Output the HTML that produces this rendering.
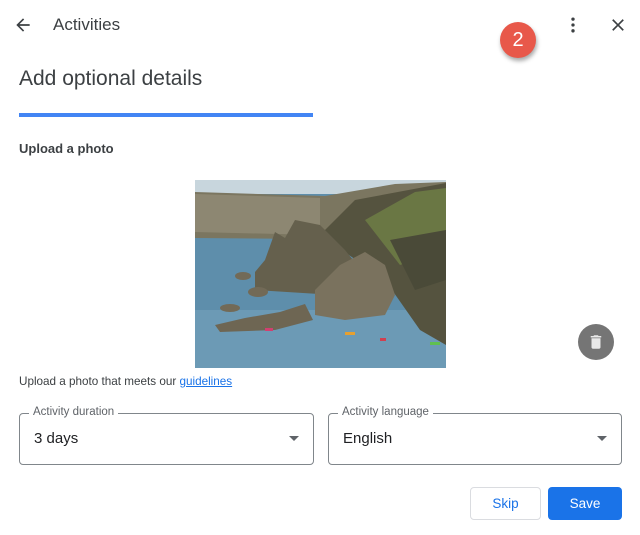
<!DOCTYPE html>
<html><head><meta charset="utf-8"><style>
*{margin:0;padding:0;box-sizing:border-box}
body{width:640px;height:535px;background:#fff;font-family:"Liberation Sans",Arial,sans-serif;color:#202124;position:relative;overflow:hidden}
.a{position:absolute}
.field{position:absolute;top:413px;height:52px;border:1px solid #80868b;border-radius:4px}
.field .lab{position:absolute;top:-8px;left:9px;background:#fff;padding:0 4px;font-size:11.5px;color:#5f6368}
.field .val{position:absolute;left:14px;top:16px;font-size:15px;color:#202124}
.field .tri{position:absolute;right:14px;top:22px;width:0;height:0;border-left:5px solid transparent;border-right:5px solid transparent;border-top:5px solid #5f6368}
</style></head><body>
<svg class="a" style="left:13px;top:15px" width="20" height="20" viewBox="0 0 24 24"><path d="M20 11H7.83l5.59-5.59L12 4l-8 8 8 8 1.41-1.41L7.83 13H20z" fill="#3c4043"/></svg>
<div class="a" style="left:53px;top:15px;font-size:17px;color:#3c4043">Activities</div>
<div class="a" style="left:500px;top:22px;width:36px;height:36px;border-radius:50%;background:#e8584a;box-shadow:1px 3px 4px rgba(0,0,0,.35);color:#fff;font-size:20px;text-align:center;line-height:36px">2</div>
<svg class="a" style="left:563px;top:15px" width="20" height="20" viewBox="0 0 24 24"><circle cx="12" cy="5" r="2" fill="#3c4043"/><circle cx="12" cy="12" r="2" fill="#3c4043"/><circle cx="12" cy="19" r="2" fill="#3c4043"/></svg>
<svg class="a" style="left:608px;top:15px" width="20" height="20" viewBox="0 0 24 24"><path d="M19 6.41L17.59 5 12 10.59 6.41 5 5 6.41 10.59 12 5 17.59 6.41 19 12 13.41 17.59 19 19 17.59 13.41 12z" fill="#3c4043"/></svg>
<div class="a" style="left:19px;top:67px;font-size:21px;color:#3c4043">Add optional details</div>
<div class="a" style="left:19px;top:113px;width:294px;height:4px;background:#4285f4"></div>
<div class="a" style="left:19px;top:141px;font-size:13px;font-weight:bold;color:#3c4043">Upload a photo</div>
<svg class="a" style="left:195px;top:180px" width="251" height="188" viewBox="0 0 251 188">
<rect width="251" height="188" fill="#5e8eab"/>
<rect width="251" height="14" fill="#c8d6dd"/>
<rect y="130" width="251" height="58" fill="#6c9ab5"/>
<polygon points="0,12 130,16 200,4 251,2 251,60 0,58" fill="#7b7660"/>
<polygon points="0,14 125,18 125,55 0,52" fill="#8d8772"/>
<polygon points="125,55 160,20 251,3 251,165 225,150 190,100" fill="#55533f"/>
<polygon points="170,40 220,12 251,8 251,70 205,85" fill="#6a7744"/>
<polygon points="195,60 251,50 251,100 220,110" fill="#4a4a38"/>
<polygon points="60,92 70,80 80,52 90,58 100,40 125,45 150,70 170,95 140,115 60,110" fill="#65604d"/>
<polygon points="120,110 145,85 170,72 190,85 200,115 190,135 150,140 120,135" fill="#7a725e"/>
<polygon points="20,145 50,138 85,132 110,124 118,140 80,150 25,152" fill="#6e6653"/>
<ellipse cx="63" cy="112" rx="10" ry="5" fill="#726a57"/>
<ellipse cx="35" cy="128" rx="10" ry="4" fill="#726a57"/>
<ellipse cx="48" cy="96" rx="8" ry="4" fill="#726a57"/>
<rect x="70" y="148" width="8" height="3" fill="#d04070"/>
<rect x="150" y="152" width="10" height="3" fill="#e6a030"/>
<rect x="185" y="158" width="6" height="3" fill="#d04050"/>
<rect x="235" y="162" width="10" height="3" fill="#60c050"/>
</svg>
<div class="a" style="left:578px;top:324px;width:36px;height:36px;border-radius:50%;background:#757575"></div>
<svg class="a" style="left:587px;top:333px" width="18" height="18" viewBox="0 0 24 24"><path d="M6 19c0 1.1.9 2 2 2h8c1.1 0 2-.9 2-2V7H6v12zM19 4h-3.5l-1-1h-5l-1 1H5v2h14V4z" fill="#e8e8e8"/></svg>
<div class="a" style="left:19px;top:375px;font-size:11.7px;color:#3c4043">Upload a photo that meets our <span style="color:#1a73e8;text-decoration:underline">guidelines</span></div>
<div class="field" style="left:19px;width:295px"><span class="lab">Activity duration</span><span class="val">3 days</span><span class="tri"></span></div>
<div class="field" style="left:328px;width:294px"><span class="lab">Activity language</span><span class="val">English</span><span class="tri"></span></div>
<div class="a" style="left:470px;top:487px;width:71px;height:33px;border:1px solid #dadce0;border-radius:4px;color:#1a73e8;font-size:13.5px;text-align:center;line-height:31px">Skip</div>
<div class="a" style="left:548px;top:487px;width:74px;height:33px;background:#1a73e8;border-radius:4px;color:#fff;font-size:13.5px;text-align:center;line-height:33px">Save</div>
</body></html>
